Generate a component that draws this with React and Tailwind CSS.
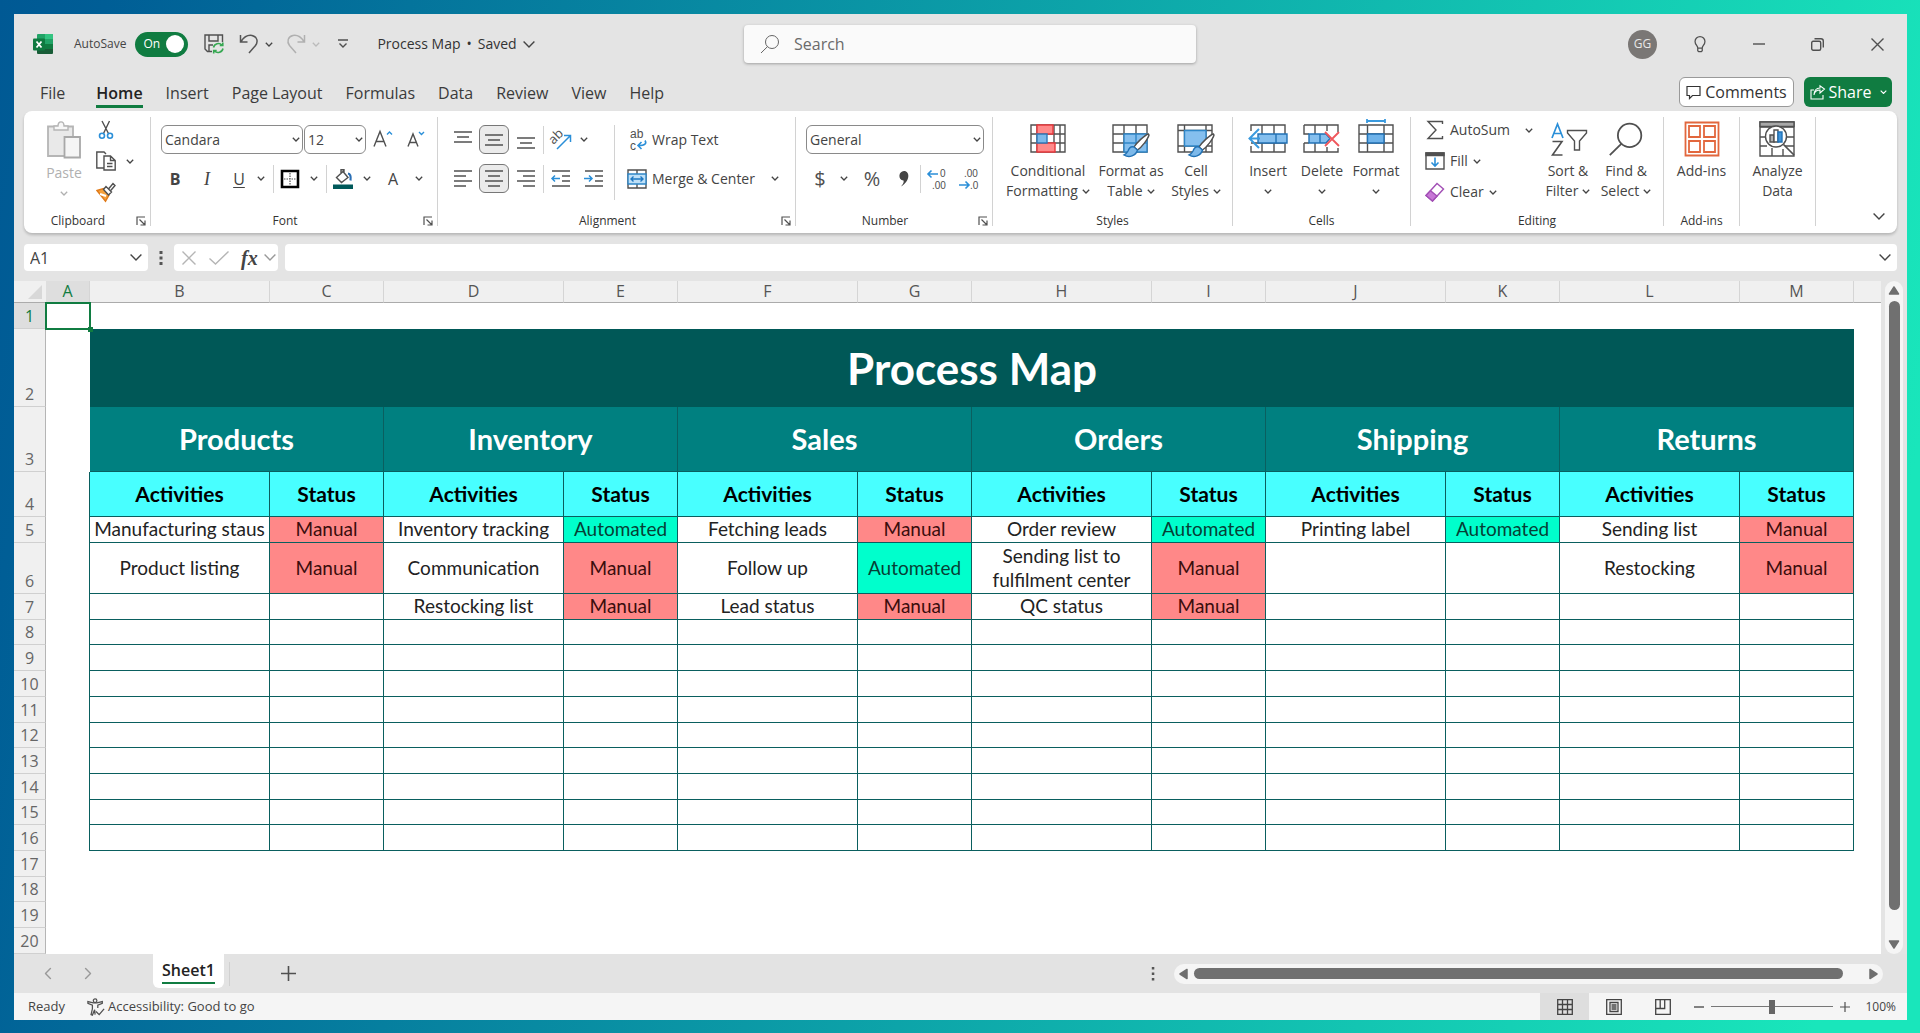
import React, { useState } from "react";

const UI_FONT = "font-['Open_Sans','Noto_Sans',sans-serif]";
const CELL_FONT = "font-[Lato,'Open_Sans',sans-serif]";

const tabs = ["File", "Home", "Insert", "Page Layout", "Formulas", "Data", "Review", "View", "Help"];
const columns = ["A", "B", "C", "D", "E", "F", "G", "H", "I", "J", "K", "L", "M"];

const areas = [
    { name: "Products", steps: [["Manufacturing staus", "Manual"], ["Product listing", "Manual"]] },
    { name: "Inventory", steps: [["Inventory tracking", "Automated"], ["Communication", "Manual"], ["Restocking list", "Manual"]] },
    { name: "Sales", steps: [["Fetching leads", "Manual"], ["Follow up", "Automated"], ["Lead status", "Manual"]] },
    { name: "Orders", steps: [["Order review", "Automated"], ["Sending list to fulfilment center", "Manual"], ["QC status", "Manual"]] },
    { name: "Shipping", steps: [["Printing label", "Automated"]] },
    { name: "Returns", steps: [["Sending list", "Manual"], ["Restocking", "Manual"]] },
];

const statusColor = {
    Manual: "bg-[#ff8888] text-[#3a0d0d]",
    Automated: "bg-[#00ffcc] text-[#063f35]",
};

/* ---------- icons ---------- */

function Icon({ className = "size-5", box = "0 0 20 20", children }) {
    return (
        <svg
            className={`shrink-0 overflow-visible ${className}`}
            viewBox={box}
            fill="none"
            stroke="#505050"
            strokeWidth="1.4"
            aria-hidden="true"
        >
            {children}
        </svg>
    );
}

function Chevron({ className = "w-2 text-[#444]" }) {
    return (
        <svg className={`shrink-0 ${className}`} viewBox="0 0 8 5" fill="none" stroke="currentColor" strokeWidth="1.3" aria-hidden="true">
            <path d="M0.8 0.8 4 4 7.2 0.8" />
        </svg>
    );
}

function ThinChevron({ className = "w-3 text-[#444]" }) {
    return (
        <svg className={`shrink-0 ${className}`} viewBox="0 0 12 7" fill="none" stroke="currentColor" strokeWidth="1.4" aria-hidden="true">
            <path d="M0.6 0.6 6 6 11.4 0.6" />
        </svg>
    );
}

function ExcelLogo() {
    return (
        <Icon className="size-5">
            <g stroke="none">
                <path d="M5 0h14a1 1 0 0 1 1 1v4H4V1a1 1 0 0 1 1-1z" fill="#21a366" />
                <path d="M12 0h7a1 1 0 0 1 1 1v4h-8z" fill="#33c481" />
                <path d="M4 5h8v5H4z" fill="#107c41" />
                <path d="M12 5h8v5h-8z" fill="#21a366" />
                <path d="M4 10h16v9a1 1 0 0 1-1 1H5a1 1 0 0 1-1-1z" fill="#185c37" />
                <path d="M12 10h8v5h-8z" fill="#107c41" />
                <rect y="4.500" width="12" height="12" rx="1" fill="#0f7a40" />
            </g>
            <path d="M3.500 7.500 8.500 13.500M8.500 7.500 3.500 13.500" stroke="#fff" strokeWidth="1.8" />
        </Icon>
    );
}

function SaveIcon() {
    return (
        <Icon>
            <path d="M8 17.500H3.500L1 15V1h17.500v7M5 1v6h9V1M5 17v-6h4" />
            <g stroke="#36a852" strokeWidth="1.600">
                <path d="M9.500 13.500a5 5 0 0 1 8.500-2.500M18.800 8.500v3h-3" />
                <path d="M19 14.500a5 5 0 0 1-8.500 2.500M9.700 19.500v-3h3" />
            </g>
        </Icon>
    );
}

function UndoIcon({ flip, color }) {
    return (
        <Icon className={flip ? "size-5 -scale-x-100" : "size-5"}>
            <path d="M1.500 1v7h7M2 7.500C5 3 9 .8 13 1.500c5 1 6.500 6 3.500 10L10 19" stroke={color} strokeWidth="1.500" />
        </Icon>
    );
}

function SearchIcon({ className, color = "#666" }) {
    return (
        <Icon className={className}>
            <circle cx="12" cy="8" r="6.500" stroke={color} strokeWidth="1" />
            <path d="M7.500 12.600 1 19" stroke={color} strokeWidth="1" />
        </Icon>
    );
}

function PasteIcon() {
    return (
        <Icon className="h-[38px] w-[34px]" box="0 0 34 38">
            <path d="M1 5.500h25V35H1z" fill="#e9e9e9" stroke="#b5b5b5" strokeWidth="1.800" />
            <path d="M7 9V5h4c0-5.500 6-5.500 6 0h4v4z" fill="#f7f7f7" stroke="#b5b5b5" />
            <path d="M17.500 16h15.500v20.500H17.500z" fill="#f5f5f5" stroke="#a8a8a8" strokeWidth="1.800" />
        </Icon>
    );
}

function CutIcon() {
    return (
        <Icon>
            <path d="M6 1l6.500 12.500M13.500 1 7.500 13.500" />
            <circle cx="6" cy="15.800" r="2.500" stroke="#2b8fd8" strokeWidth="1.600" />
            <circle cx="14" cy="15.800" r="2.500" stroke="#2b8fd8" strokeWidth="1.600" />
        </Icon>
    );
}

function CopyIcon() {
    return (
        <Icon>
            <path d="M8 17H.8V1H8l2 2M8 5h6.500L19.200 9.500V19H8zM14.500 5v4.500h4.700M11 12.500h5.500M11 15.500h5.500" />
        </Icon>
    );
}

function PainterIcon() {
    return (
        <Icon>
            <path d="M1 8.500 7.500 6.500 13 13 9.500 19.200z" fill="#f6a13c" stroke="#e07b1a" />
            <path d="M4 12 10 14" stroke="#fff" strokeWidth="2" />
            <path d="M7.500 7.500 10 4.500l5.500 5.500-3 3zM12.500 7 17 1.500l2 2L14.500 8.800" fill="#fff" />
        </Icon>
    );
}

function BordersIcon() {
    return (
        <Icon>
            <path d="M2 2h16v16H2z" stroke="#000" strokeWidth="2.600" />
            <path d="M10 4v12M4 10h12" strokeDasharray="1.500 1" strokeWidth="1.200" />
        </Icon>
    );
}

function FillColorIcon() {
    return (
        <Icon>
            <path d="M0 15.500h20V20H0z" fill="#00595a" stroke="none" />
            <path d="M3.500 8.500 10 2.500l5 6-6.500 5zM8 4.500V.8h3v3" />
            <path d="M15 4.500c2.500.5 3 3.500 2.500 7" stroke="#2a6fb5" strokeWidth="2.200" />
        </Icon>
    );
}

const alignLines = {
    top: [[1, 2, 18], [4, 7, 12], [1, 12, 18]],
    middle: [[1, 5, 18], [4, 10, 12], [1, 15, 18]],
    bottom: [[1, 8, 18], [4, 13, 12], [1, 18, 18]],
    left: [[1, 2, 18], [1, 7, 12], [1, 12, 18], [1, 17, 12]],
    center: [[1, 2, 18], [4, 7, 12], [1, 12, 18], [4, 17, 12]],
    right: [[1, 2, 18], [7, 7, 12], [1, 12, 18], [7, 17, 12]],
};

function AlignIcon({ kind }) {
    return (
        <Icon>
            {alignLines[kind].map(([x, y, w]) => (
                <path key={y} d={`M${x} ${y}h${w}`} strokeWidth="1.500" />
            ))}
        </Icon>
    );
}

function IndentIcon({ increase }) {
    return (
        <Icon>
            <path d="M1 2h18M11 7h8M11 12h8M1 17h18" strokeWidth="1.500" />
            <path
                d={increase ? "M0 9.500h8M5 6.500l3 3-3 3" : "M9 9.500H1M4 6.500l-3 3 3 3"}
                stroke="#2b8fd8"
                strokeWidth="1.500"
            />
        </Icon>
    );
}

function OrientationIcon() {
    return (
        <Icon>
            <text x="0" y="11" transform="rotate(-45 6 10)" fontSize="13" fill="#505050" stroke="none">ab</text>
            <path d="M6 19 19 6M13 5.500h6.500V12" stroke="#2b8fd8" strokeWidth="1.500" />
        </Icon>
    );
}

function WrapIcon() {
    return (
        <Icon className="size-5 font-[Liberation_Sans,sans-serif]">
            <text x="3" y="8" fontSize="12" fill="#505050" stroke="none">ab</text>
            <text x="3" y="20" fontSize="12" fill="#505050" stroke="none">c</text>
            <path d="M18 10.500c2 3 0 5-6.500 5M14.500 12 11 15.500l3.500 3.500" stroke="#2b8fd8" strokeWidth="1.600" />
        </Icon>
    );
}

function MergeIcon() {
    return (
        <Icon>
            <path d="M1 1h18v18H1zM10 1v4M10 15v4" />
            <path d="M1 5h18v10H1z" fill="#bfe0f7" stroke="#2f86c7" />
            <path d="M4 10h12M6.500 7.500 4 10l2.500 2.500M13.500 7.500 16 10l-2.500 2.500" stroke="#1e78c2" />
        </Icon>
    );
}

function DecimalIcon({ increase }) {
    return (
        <Icon className="size-5 font-[Liberation_Sans,sans-serif]">
            <text x={increase ? 13 : 5} y="8" fontSize="10" fill="#505050" stroke="none">{increase ? "0" : ".00"}</text>
            <text x={increase ? 5 : 11} y="20" fontSize="10" fill="#505050" stroke="none">{increase ? ".00" : ".0"}</text>
            <path
                d={increase ? "M11 5H1M4.500 1.500 1 5l3.500 3.500" : "M0 16h10M6.500 12.500 10 16l-3.500 3.500"}
                stroke="#2b8fd8"
                strokeWidth="1.600"
            />
        </Icon>
    );
}

function ConditionalIcon() {
    return (
        <Icon className="size-9" box="0 0 36 36">
            <path d="M1 4h34v27H1zM1 13h34M1 22h34M7 4v27M24 4v27M30 4v27" />
            <path d="M7 4h16v9H7zM7 22h18v9H7z" fill="#ff8a8a" stroke="#e8383d" />
            <path d="M7 13h10v9H7z" fill="#7db9ea" stroke="#2f79b8" />
        </Icon>
    );
}

function Brush() {
    return (
        <>
            <path d="M36.500 13c-4 1-12 9-14.500 13l3.500 3C30 26 36 18 37 14z" fill="#fff" stroke="#505050" />
            <path d="M22 26c-3-1-5 1-6 4-1 2-2 3-4 4 5 3 12 1 13.500-5z" fill="#7db9ea" stroke="#2272b5" />
        </>
    );
}

function FormatTableIcon() {
    return (
        <Icon className="h-9 w-[38px]" box="0 0 38 36">
            <path d="M1 4h34v27H1zM1 13h34M1 22h34M12 4v27M24 4v27" />
            <path d="M12 13h23v18H12z" fill="#85bfee" stroke="#2f86c7" />
            <path d="M24 13v18M12 22h23" stroke="#2f86c7" />
            <Brush />
        </Icon>
    );
}

function CellStylesIcon() {
    return (
        <Icon className="h-9 w-[38px]" box="0 0 38 36">
            <path d="M1 4h34v27H1zM1 9.500h34M1 25h34M7.500 4v27M29 4v27" />
            <path d="M7.500 9.500H29V25H7.500z" fill="#85bfee" stroke="#2f86c7" />
            <Brush />
        </Icon>
    );
}

function InsertIcon() {
    return (
        <Icon className="h-9 w-10" box="0 0 40 36">
            <path d="M3 10V4h34v27H3v-6M14 4v27M26 4v27M3 22h34" />
            <path d="M10 13h29v9H10z" fill="#85bfee" stroke="#2272b5" />
            <path d="M28 13v9" stroke="#2272b5" />
            <path d="M12 17.500H2M11 8l-9.500 9.500L11 27" stroke="#3a9ade" strokeWidth="2" />
        </Icon>
    );
}

function DeleteIcon() {
    return (
        <Icon className="h-9 w-[38px]" box="0 0 38 36">
            <path d="M1 4h34v7M1 4v9h5M1 22v9h34v-4M1 22h5M12 4v9M24 4v6M12 22v9M24 26v5" />
            <path d="M6 13h17l4 4.500-4 4.500H6zM17 13v9" fill="#85bfee" stroke="#2272b5" />
            <path d="M22 11l14 14M36 11 22 25" stroke="#f0575c" strokeWidth="1.800" />
        </Icon>
    );
}

function FormatIcon() {
    return (
        <Icon className="size-9" box="0 0 36 36">
            <path d="M1 4h34v27H1zM1 13h34M1 22h34M9.500 4v27M26 4v27" />
            <path d="M9.500 13H26v9H9.500z" fill="#6fb3ea" stroke="#2272b5" />
            <path d="M9 0h18M9-2v4M27-2v4" stroke="#3a9ade" strokeWidth="1.800" />
        </Icon>
    );
}

function SumIcon() {
    return (
        <Icon>
            <path d="M17.500 4V1.500H3L11 10l-8 8.500h14.500V16" />
        </Icon>
    );
}

function FillIcon() {
    return (
        <Icon>
            <path d="M1 2h18v16H1z" />
            <path d="M1 2h18v2.500H1z" fill="#505050" />
            <path d="M10 6.500V15M6.500 11.500 10 15l3.500-3.500" stroke="#2b8fd8" strokeWidth="1.600" />
        </Icon>
    );
}

function EraserIcon() {
    return (
        <Icon>
            <path d="M1 13.500 12 1.500l6.500 5.500-11 12z" fill="#fff" stroke="#a24fb5" />
            <path d="M1 13.500 5.500 8.600 12 14l-4.500 5z" fill="#c778d6" stroke="#a24fb5" />
        </Icon>
    );
}

function SortIcon() {
    return (
        <Icon className="h-9 w-[38px]" box="0 0 38 36">
            <path d="M3 17 8.500 3 14 17M5 12.500h7" stroke="#2b8fd8" strokeWidth="1.700" />
            <path d="M3.500 20.500h9.500L3.500 34h10" strokeWidth="1.600" />
            <path d="M18.500 9.500h19v2.500l-7 8v9h-5v-9l-7-8z" />
        </Icon>
    );
}

function AddInsIcon() {
    return (
        <Icon className="size-9" box="0 0 36 36">
            <g stroke="#e2673d" strokeWidth="1.800">
                <path d="M1.500 1.500h33v33h-33zM5 5h11v11H5zM20 5h11v11H20zM5 20h11v11H5zM20 20h11v11H20z" />
            </g>
        </Icon>
    );
}

function AnalyzeIcon() {
    return (
        <Icon className="size-9" box="0 0 36 36">
            <path d="M1 1h34v34H1zM1 6h34M1 16h5M28 16h7M1 25h7M26 25h9M13 27v8M24 28v7" />
            <path d="M1 1h34v4.500H1z" fill="#a8a8a8" />
            <circle cx="17" cy="15.500" r="10.500" fill="#fff" />
            <path d="M24.500 23.500 35 34" strokeWidth="1.700" />
            <path d="M11 14h4v7h-4z" fill="#b5b5b5" />
            <path d="M15 9h4v12h-4z" fill="#fff" />
            <path d="M19 11h4v10h-4z" fill="#3f95dd" stroke="#2272b5" />
        </Icon>
    );
}

function Launcher() {
    return (
        <button type="button" aria-label="More options" className="absolute right-1 bottom-0">
            <Icon className="size-[10px]" box="0 0 10 10">
                <path d="M1 9V1h8M3.500 3.500l5.500 5.500M9 4.500V9H4.500" strokeWidth="1.200" />
            </Icon>
        </button>
    );
}

/* ---------- ribbon pieces ---------- */

function Group({ label, launcher, className, children }) {
    return (
        <section className={`relative flex shrink-0 flex-col border-r border-[#d2d2d2] ${className}`}>
            <div className="flex flex-1">{children}</div>
            <h2 className={`h-[11px] text-center text-xs leading-3 text-[#333] ${launcher ? "pr-[18px]" : ""}`}>{label}</h2>
            {launcher && <Launcher />}
        </section>
    );
}

function Tool({ label, active, className = "w-8", children }) {
    return (
        <button
            type="button"
            aria-label={label}
            className={`flex h-[29px] items-center justify-center ${active ? "rounded-md border border-[#777] bg-[#ebebeb]" : ""} ${className}`}
        >
            {children}
        </button>
    );
}

function BigTool({ icon, lines, arrow, className }) {
    return (
        <button type="button" className={`flex flex-col items-center text-sm leading-5 text-[#444] ${className}`}>
            {icon}
            {lines.map((line, i) => (
                <span key={line} className={`flex items-center gap-1 whitespace-nowrap ${i === 0 ? "mt-1" : ""}`}>
                    {line}
                    {arrow && i === lines.length - 1 && lines.length > 1 && <Chevron />}
                </span>
            ))}
            {arrow && lines.length === 1 && <Chevron className="mt-2 w-2 text-[#444]" />}
        </button>
    );
}

function Dropdown({ label, options, className }) {
    return (
        <div className={`relative h-[29px] ${className}`}>
            <select
                aria-label={label}
                className="h-full w-full appearance-none rounded-md border border-[#8a8a8a] bg-white pl-[3px] text-sm text-[#444]"
            >
                {options.map((o) => (
                    <option key={o}>{o}</option>
                ))}
            </select>
            <Chevron className="pointer-events-none absolute top-3 right-[3px] w-2 text-[#444]" />
        </div>
    );
}

function Divider({ className = "h-7" }) {
    return <span className={`w-px bg-[#d2d2d2] ${className}`} />;
}

function Ribbon() {
    return (
        <div className="mx-[10px] flex h-[122px] shrink-0 overflow-hidden rounded-lg bg-white pt-[6px] pb-[7px] shadow-[0_2px_3px_rgba(0,0,0,0.2)]">
            <Group label="Clipboard" launcher className="w-[127px]">
                <button type="button" disabled className="ml-[22px] flex w-9 flex-col items-center pt-1 text-sm leading-5 text-[#b0b0b0]">
                    <PasteIcon />
                    <span className="mt-1">Paste</span>
                    <Chevron className="mt-2 w-2 text-[#b0b0b0]" />
                </button>
                <div className="ml-[14px] flex flex-col gap-[11px] pt-[3px]">
                    <button type="button" aria-label="Cut"><CutIcon /></button>
                    <button type="button" aria-label="Copy" className="flex items-center gap-[10px]"><CopyIcon /><Chevron /></button>
                    <button type="button" aria-label="Format painter"><PainterIcon /></button>
                </div>
            </Group>

            <Group label="Font" launcher className="w-[287px]">
                <div className="flex flex-col gap-[10px] pt-2 pl-[10px]">
                    <div className="flex items-center gap-px">
                        <Dropdown label="Font name" options={["Candara", "Calibri", "Arial"]} className="w-[142px]" />
                        <Dropdown label="Font size" options={["12", "14", "16"]} className="w-[62px]" />
                        <Tool label="Increase font size">
                            <Icon className="size-5">
                                <path d="M1 16.500 7 1.500l6 15M3.200 11.500h7.600" />
                                <path d="M14 4.500 16.500 2 19 4.500" stroke="#2b8fd8" />
                            </Icon>
                        </Tool>
                        <Tool label="Decrease font size">
                            <Icon className="size-5">
                                <path d="M2 16.500 7 4l5 12.500M4 12.500h6" />
                                <path d="M13 2l2.500 2.500L18 2" stroke="#2b8fd8" />
                            </Icon>
                        </Tool>
                    </div>
                    <div className="flex items-center text-base text-[#444]">
                        <Tool label="Bold" className="w-7"><b>B</b></Tool>
                        <Tool label="Italic" className="w-9"><i className="font-[Liberation_Serif,serif] text-lg">I</i></Tool>
                        <Tool label="Underline" className="w-7"><u className="underline-offset-2">U</u></Tool>
                        <Tool label="Underline style" className="w-4"><Chevron /></Tool>
                        <span className="w-1" />
                        <Divider />
                        <Tool label="Borders"><BordersIcon /></Tool>
                        <Tool label="Border style" className="w-4"><Chevron /></Tool>
                        <span className="w-1" />
                        <Divider />
                        <Tool label="Fill color"><FillColorIcon /></Tool>
                        <Tool label="Fill color list" className="w-4"><Chevron /></Tool>
                        <Tool label="Font color" className="w-9">A</Tool>
                        <Tool label="Font color list" className="w-4"><Chevron /></Tool>
                    </div>
                </div>
            </Group>

            <Group label="Alignment" launcher className="w-[358px]">
                <div className="flex flex-col gap-[10px] pt-2 pl-[10px]">
                    <div className="flex items-center gap-px">
                        <Tool label="Top align" className="w-[30px]"><AlignIcon kind="top" /></Tool>
                        <Tool label="Middle align" active className="w-[30px]"><AlignIcon kind="middle" /></Tool>
                        <Tool label="Bottom align"><AlignIcon kind="bottom" /></Tool>
                        <Divider />
                        <Tool label="Orientation"><OrientationIcon /></Tool>
                        <Tool label="Orientation list" className="w-3"><Chevron /></Tool>
                    </div>
                    <div className="flex items-center gap-px">
                        <Tool label="Align left" className="w-[30px]"><AlignIcon kind="left" /></Tool>
                        <Tool label="Align center" active className="w-[30px]"><AlignIcon kind="center" /></Tool>
                        <Tool label="Align right"><AlignIcon kind="right" /></Tool>
                        <Divider />
                        <Tool label="Decrease indent"><IndentIcon /></Tool>
                        <Tool label="Increase indent"><IndentIcon increase /></Tool>
                    </div>
                </div>
                <Divider className="mt-2 ml-1 h-[75px]" />
                <div className="flex flex-1 flex-col gap-[10px] pt-2 pl-3 text-sm text-[#444]">
                    <button type="button" className="flex h-[29px] items-center gap-[5px]"><WrapIcon />Wrap Text</button>
                    <button type="button" className="flex h-[29px] items-center gap-[5px] whitespace-nowrap">
                        <MergeIcon />Merge &amp; Center
                        <Chevron className="ml-auto mr-4 w-2 text-[#444]" />
                    </button>
                </div>
            </Group>

            <Group label="Number" launcher className="w-[197px]">
                <div className="flex flex-col gap-[10px] pt-2 pl-[10px]">
                    <Dropdown label="Number format" options={["General", "Number", "Currency"]} className="w-[178px]" />
                    <div className="flex items-center text-xl text-[#505050]">
                        <Tool label="Accounting format" className="w-7">$</Tool>
                        <Tool label="Accounting list" className="w-5"><Chevron /></Tool>
                        <Tool label="Percent style" className="w-9">%</Tool>
                        <Tool label="Comma style" className="w-[30px]">
                            <Icon>
                                <path d="M9 2c6 0 6.500 10-3 15.500 2.500-3 3-4.500 2.500-6-6-.5-5-9.500.5-9.500z" fill="#444" stroke="none" />
                            </Icon>
                        </Tool>
                        <Divider />
                        <Tool label="Increase decimal"><DecimalIcon increase /></Tool>
                        <Tool label="Decrease decimal"><DecimalIcon /></Tool>
                    </div>
                </div>
            </Group>

            <Group label="Styles" className="w-60">
                <div className="flex pt-1 pl-[9px]">
                    <BigTool icon={<ConditionalIcon />} lines={["Conditional", "Formatting"]} arrow className="w-[92px]" />
                    <BigTool icon={<FormatTableIcon />} lines={["Format as", "Table"]} arrow className="w-[74px]" />
                    <BigTool icon={<CellStylesIcon />} lines={["Cell", "Styles"]} arrow className="w-14" />
                </div>
            </Group>

            <Group label="Cells" className="w-[178px]">
                <div className="flex pt-1 pl-2">
                    <BigTool icon={<InsertIcon />} lines={["Insert"]} arrow className="w-[54px]" />
                    <BigTool icon={<DeleteIcon />} lines={["Delete"]} arrow className="w-[54px]" />
                    <BigTool icon={<FormatIcon />} lines={["Format"]} arrow className="w-[54px]" />
                </div>
            </Group>

            <Group label="Editing" className="w-[253px]">
                <div className="flex w-[122px] flex-col gap-[11px] pt-[3px] pl-[14px] text-sm leading-5 text-[#444]">
                    <button type="button" className="flex items-center gap-[5px]"><SumIcon />AutoSum<Chevron className="ml-auto w-2 text-[#444]" /></button>
                    <button type="button" className="flex items-center gap-[5px]"><FillIcon />Fill<Chevron /></button>
                    <button type="button" className="flex items-center gap-[5px]"><EraserIcon />Clear<Chevron /></button>
                </div>
                <div className="ml-[6px] flex pt-1">
                    <BigTool icon={<SortIcon />} lines={["Sort &", "Filter"]} arrow className="w-[58px]" />
                    <BigTool icon={<SearchIcon className="size-9" color="#505050" />} lines={["Find &", "Select"]} arrow className="w-[58px]" />
                </div>
            </Group>

            <Group label="Add-ins" className="w-[76px]">
                <div className="flex flex-1 justify-center pt-1">
                    <BigTool icon={<AddInsIcon />} lines={["Add-ins"]} />
                </div>
            </Group>

            <Group className="w-[76px]">
                <div className="flex flex-1 justify-center pt-1">
                    <BigTool icon={<AnalyzeIcon />} lines={["Analyze", "Data"]} />
                </div>
            </Group>

            <button type="button" aria-label="Collapse ribbon" className="mr-3 ml-auto self-end pb-[6px]">
                <ThinChevron />
            </button>
        </div>
    );
}

/* ---------- window chrome ---------- */

function TitleBar() {
    return (
        <header className="flex h-[60px] shrink-0 items-center pl-[19px]">
            <div className="flex flex-1 items-center">
                <ExcelLogo />
                <label className="ml-[21px] flex items-center gap-[9px] text-xs text-[#444]">
                    AutoSave
                    <input type="checkbox" defaultChecked className="peer sr-only" />
                    <span className="flex h-[25px] w-[53px] items-center justify-between rounded-full bg-[#107c41] pr-1 pl-2 text-white">
                        On
                        <span className="size-[18px] rounded-full bg-white" />
                    </span>
                </label>
                <button type="button" aria-label="Save" className="ml-4"><SaveIcon /></button>
                <button type="button" aria-label="Undo" className="ml-[15px] flex items-center gap-[6px]"><UndoIcon color="#555" /><Chevron /></button>
                <button type="button" aria-label="Redo" className="ml-[13px] flex items-center gap-[6px]"><UndoIcon flip color="#b0b0b0" /><Chevron className="w-2 text-[#bbb]" /></button>
                <button type="button" aria-label="Customize toolbar" className="ml-[18px]">
                    <Icon className="size-[10px]" box="0 0 10 10">
                        <path d="M0 1h10M1.500 4.500 5 8l3.500-3.500" />
                    </Icon>
                </button>
                <button type="button" className="ml-[29px] flex items-center gap-[6px] text-sm whitespace-nowrap text-[#333]">
                    <span>Process Map</span>
                    <span>•</span>
                    <span>Saved</span>
                    <ThinChevron />
                </button>
            </div>

            <label className="flex h-[38px] w-[452px] items-center gap-[14px] rounded bg-[#fafafa] pl-4 shadow-[0_1px_3px_rgba(0,0,0,0.3)]">
                <SearchIcon className="size-5" />
                <input type="search" aria-label="Search" placeholder="Search" className="flex-1 text-base text-[#444] outline-none placeholder:text-[#6b6b6b]" />
            </label>

            <div className="flex flex-1 items-center justify-end">
                <button type="button" className="size-[29px] rounded-full bg-[#7a7775] text-xs text-[#e8e8e8]">GG</button>
                <button type="button" aria-label="Tips" className="ml-[14px] flex w-[58px] justify-center">
                    <Icon className="size-[18px]">
                        <path d="M7.500 14.500C7.500 12 4.500 11 4.500 7.200a5.500 5.500 0 0 1 11 0c0 3.800-3 4.800-3 7.300zM7.500 14.500v3l1 1h3l1-1v-3" />
                    </Icon>
                </button>
                <button type="button" aria-label="Minimize" className="flex w-[59px] justify-center">
                    <Icon className="size-3" box="0 0 12 12"><path d="M0 6h12" /></Icon>
                </button>
                <button type="button" aria-label="Restore" className="flex w-[59px] justify-center">
                    <Icon className="size-[13px]" box="0 0 13 13">
                        <rect x="0.700" y="3.300" width="9" height="9" rx="1.500" />
                        <path d="M3.500.8H10A2.300 2.300 0 0 1 12.300 3v6.500" />
                    </Icon>
                </button>
                <button type="button" aria-label="Close" className="flex w-[60px] justify-center">
                    <Icon className="size-[13px]" box="0 0 13 13"><path d="M.5.5l12 12M12.500.5l-12 12" /></Icon>
                </button>
            </div>
        </header>
    );
}

function TabBar() {
    const [tab, setTab] = useState("Home");

    return (
        <nav className="flex h-[37px] shrink-0 items-start justify-between pt-[2px] pr-[15px] pl-[26px]">
            <div className="flex gap-[23px] pt-[5px] text-base leading-6 text-[#3b3b3b]">
                {tabs.map((t) => (
                    <button
                        key={t}
                        type="button"
                        onClick={() => setTab(t)}
                        className={
                            t === tab
                                ? "border-b-[3px] border-[#107c41] font-semibold text-[#222] first:mr-2"
                                : "border-b-[3px] border-transparent first:mr-2"
                        }
                    >
                        {t}
                    </button>
                ))}
            </div>
            <div className="flex gap-[10px] pt-px text-base">
                <button type="button" className="flex h-[30px] w-[115px] items-center justify-center gap-1 rounded-md border border-[#999] bg-white text-[#333]">
                    <Icon className="size-[15px]" box="0 0 15 15">
                        <path d="M1 1.500h13v9H6.500L3.500 13.500v-3H1z" stroke="#333" strokeWidth="1.200" />
                    </Icon>
                    Comments
                </button>
                <button type="button" className="flex h-[30px] w-[88px] items-center justify-center gap-1 rounded-md bg-[#107c41] text-white">
                    <Icon className="size-[15px]" box="0 0 15 15">
                        <path d="M4 5H1v9h12V10M4 10c.5-3.500 2.500-5 6-5V8l4.500-4L10 .8V3C6 3 4 6 4 10z" stroke="#fff" strokeWidth="1.100" />
                    </Icon>
                    Share
                    <Chevron className="ml-1 w-[7px] text-white" />
                </button>
            </div>
        </nav>
    );
}

function FormulaBar() {
    return (
        <div className="mt-[11px] flex h-[27px] shrink-0 items-stretch px-[10px]">
            <div className="flex w-[124px] items-center rounded bg-white pr-[6px] pl-[6px]">
                <input aria-label="Name box" defaultValue="A1" className="w-0 flex-1 text-base text-[#444] outline-none" />
                <ThinChevron />
            </div>
            <span className="flex w-[26px] items-center justify-center">
                <Icon className="h-[14px] w-1" box="0 0 4 14">
                    <path d="M.5 0h3v3h-3zM.5 5.500h3v3h-3zM.5 11h3v3h-3z" fill="#555" stroke="none" />
                </Icon>
            </span>
            <div className="flex w-[104px] items-center rounded bg-white pl-2">
                <button type="button" aria-label="Cancel">
                    <Icon className="size-[14px]" box="0 0 14 14"><path d="M.5.5l13 13M13.500.5l-13 13" stroke="#b5b5b5" /></Icon>
                </button>
                <button type="button" aria-label="Enter" className="ml-[13px]">
                    <Icon className="h-[14px] w-5" box="0 0 20 14"><path d="M.5 7.500 6.500 13 19.500.5" stroke="#b5b5b5" /></Icon>
                </button>
                <button type="button" aria-label="Insert function" className="ml-3 font-[Liberation_Serif,serif] text-xl leading-6 font-semibold text-[#444] italic">
                    fx
                </button>
                <ThinChevron className="ml-[6px] w-3 text-[#999]" />
            </div>
            <div className="ml-[7px] flex flex-1 items-center rounded bg-white pr-[6px]">
                <input aria-label="Formula" className="flex-1 px-2 text-sm outline-none" />
                <ThinChevron />
            </div>
        </div>
    );
}

/* ---------- sheet ---------- */

const gridLine = "border-r border-b border-[#0a5f5f]";

function RowHeader({ n, active }) {
    return (
        <th
            scope="row"
            className={`border-r border-b border-[#d0d0d0] border-r-[#b5b5b5] p-0 align-bottom leading-6 ${UI_FONT} text-base font-normal ${active ? "bg-[#dedede] text-[#107c41]" : "bg-[#f0f0f0] text-[#666]"}`}
        >
            {n}
        </th>
    );
}

function StepRow({ n, height, index }) {
    return (
        <tr className={height}>
            <RowHeader n={n} />
            <td className="border-r border-[#0a5f5f]" />
            {areas.map((area) => {
                const [activity, status] = area.steps[index] || ["", ""];
                return (
                    <React.Fragment key={area.name}>
                        <td className={`px-1 py-0 ${activity.length > 20 ? "" : "whitespace-nowrap"} ${gridLine}`}>{activity}</td>
                        <td className={`p-0 ${gridLine} ${statusColor[status] || ""}`}>{status}</td>
                    </React.Fragment>
                );
            })}
            <td />
        </tr>
    );
}

function Sheet() {
    return (
        <table className={`h-full w-full table-fixed border-separate border-spacing-0 bg-white text-center text-[19px] leading-6 text-[#222] ${CELL_FONT}`}>
            <colgroup>
                <col className="w-8" />
                <col className="w-[44px]" />
                {areas.map((a) => (
                    <React.Fragment key={a.name}>
                        <col className="w-[180px]" />
                        <col className="w-[114px]" />
                    </React.Fragment>
                ))}
                <col />
            </colgroup>
            <thead>
                <tr className={`h-[22px] ${UI_FONT} text-base leading-[21px] text-[#555]`}>
                    <th className="border-b border-[#ababab] bg-[#f0f0f0] p-0" aria-label="Select all">
                        <Icon className="mr-1 ml-auto size-[14px]" box="0 0 12 12"><path d="M12 0v12H0z" fill="#d8d8d8" stroke="none" /></Icon>
                    </th>
                    {columns.map((c) => (
                        <th
                            key={c}
                            scope="col"
                            className={`border-r border-b border-[#d5d5d5] border-b-[#ababab] p-0 font-normal ${c === "A" ? "bg-[#dedede] text-[#107c41]" : "bg-[#f0f0f0]"}`}
                        >
                            {c}
                        </th>
                    ))}
                    <th className="border-b border-[#ababab] bg-[#f0f0f0] p-0" />
                </tr>
            </thead>
            <tbody>
                <tr className="h-[25px]">
                    <RowHeader n={1} active />
                    <td className="relative p-0">
                        <span className="absolute -inset-px border-2 border-[#107c41]" />
                        <span className="absolute -right-[3px] -bottom-[3px] size-[5px] bg-[#107c41]" />
                    </td>
                    <td colSpan={13} />
                </tr>
                <tr className="h-[76px]">
                    <RowHeader n={2} />
                    <td />
                    <td colSpan={12} className="bg-[#005857] p-0 text-[44px] leading-[52px] font-bold text-white">Process Map</td>
                    <td />
                </tr>
                <tr className="h-[63px]">
                    <RowHeader n={3} />
                    <td />
                    {areas.map((a) => (
                        <td key={a.name} colSpan={2} className={`bg-[#008080] p-0 text-[29px] leading-9 font-bold text-white ${gridLine}`}>{a.name}</td>
                    ))}
                    <td />
                </tr>
                <tr className="h-[44px] text-[21px] font-bold text-black">
                    <RowHeader n={4} />
                    <td className="border-r border-[#0a5f5f]" />
                    {areas.map((a) => (
                        <React.Fragment key={a.name}>
                            <td className={`bg-[#48ffff] p-0 ${gridLine}`}>Activities</td>
                            <td className={`bg-[#48ffff] p-0 ${gridLine}`}>Status</td>
                        </React.Fragment>
                    ))}
                    <td />
                </tr>
                <StepRow n={5} height="h-[25px]" index={0} />
                <StepRow n={6} height="h-[50px]" index={1} />
                {Array.from({ length: 10 }, (_, i) => (
                    <StepRow key={i} n={i + 7} height="h-[25px]" index={i + 2} />
                ))}
                {[17, 18, 19, 20].map((n) => (
                    <tr key={n} className="h-[25px]">
                        <RowHeader n={n} />
                        <td colSpan={14} />
                    </tr>
                ))}
            </tbody>
        </table>
    );
}

function Arrow({ d, className = "size-3" }) {
    return (
        <svg className={`shrink-0 ${className}`} viewBox="0 0 12 12" fill="#6e6e6e" stroke="#6e6e6e" strokeWidth="1.500" strokeLinejoin="round" aria-hidden="true">
            <path d={d} />
        </svg>
    );
}

function SheetTabs() {
    return (
        <div className="flex h-[39px] shrink-0 items-center bg-[#e3e3e3]">
            <div className="flex w-[139px] gap-7 pl-7">
                <button type="button" aria-label="Previous sheet"><ThinChevron className="w-3 rotate-90 text-[#999]" /></button>
                <button type="button" aria-label="Next sheet"><ThinChevron className="w-3 -rotate-90 text-[#999]" /></button>
            </div>
            <button type="button" className="h-[34px] w-[71px] self-start rounded-b-md bg-white text-base font-semibold text-[#222]">
                <span className="inline-block border-b-2 border-[#107c41] leading-6">Sheet1</span>
            </button>
            <span className="ml-[5px] h-6 w-px bg-[#d0d0d0]" />
            <button type="button" aria-label="New sheet" className="ml-[51px]">
                <Icon className="size-[15px]" box="0 0 15 15"><path d="M7.500 0v15M0 7.500h15" strokeWidth="1.600" /></Icon>
            </button>
            <div className="mr-6 ml-auto flex w-[732px] items-center gap-[19px]">
                <Icon className="h-[14px] w-1" box="0 0 4 14">
                    <path d="M.8 0h2.500v2.500H.8zM.8 5.500h2.500V8H.8zM.8 11h2.500v2.500H.8z" fill="#555" stroke="none" />
                </Icon>
                <div className="flex h-5 flex-1 items-center gap-1 rounded-full bg-[#f5f5f5] px-1">
                    <Arrow d="M9 1.500v9L2 6z" />
                    <span className="h-[11px] flex-1 rounded-full bg-[#707070]" />
                    <Arrow d="M3 1.500v9L10 6z" className="ml-5 size-3" />
                </div>
            </div>
        </div>
    );
}

function StatusBar() {
    return (
        <footer className="flex h-[27px] shrink-0 items-center bg-[#f5f5f5] pr-[11px] pl-[14px] text-[13px] text-[#444]">
            <span>Ready</span>
            <button type="button" className="ml-[22px] flex items-center gap-[3px]">
                <Icon className="size-[18px]">
                    <circle cx="9" cy="3" r="2" />
                    <path d="M9 18.500 8.500 13 6 19 4.500 18.500 6 12V8L1 6V4l6 1.500h4L17 4v2l-5 2v3M10 15l3.500 3.500L19 12" />
                </Icon>
                Accessibility: Good to go
            </button>
            <div className="ml-auto flex items-center self-stretch">
                <button type="button" aria-label="Normal view" className="flex h-full w-[49px] items-center justify-center bg-[#dedede]">
                    <Icon className="size-4" box="0 0 16 16"><path d="M.7.7h14.600v14.600H.7zM5.500.7v14.600M10.500.7v14.600M.7 5.500h14.600M.7 10.500h14.600" stroke="#444" strokeWidth="1.300" /></Icon>
                </button>
                <button type="button" aria-label="Page layout view" className="flex w-[49px] justify-center">
                    <Icon className="size-4" box="0 0 16 16"><path d="M.7.7h14.600v14.600H.7zM4 3.500h8v9H4zM5.500 6h5M5.500 8h5M5.500 10h5" stroke="#444" strokeWidth="1.300" /></Icon>
                </button>
                <button type="button" aria-label="Page break view" className="flex w-[49px] justify-center">
                    <Icon className="size-4" box="0 0 16 16"><path d="M.7.7h14.600v14.600H.7zM.7 9.500h9V.7M5.200.7v8.800" stroke="#444" strokeWidth="1.300" /></Icon>
                </button>
                <button type="button" aria-label="Zoom out" className="ml-[7px]">
                    <Icon className="size-[10px]" box="0 0 10 10"><path d="M0 5h10" /></Icon>
                </button>
                <input
                    type="range"
                    aria-label="Zoom"
                    defaultValue={50}
                    className="mx-[7px] h-4 w-[122px] appearance-none bg-[linear-gradient(#777,#777)] bg-size-[100%_1px] bg-center bg-no-repeat [&::-webkit-slider-thumb]:h-[14px] [&::-webkit-slider-thumb]:w-[6px] [&::-webkit-slider-thumb]:appearance-none [&::-webkit-slider-thumb]:bg-[#666]"
                />
                <button type="button" aria-label="Zoom in">
                    <Icon className="size-[10px]" box="0 0 10 10"><path d="M0 5h10M5 0v10" strokeWidth="1.200" /></Icon>
                </button>
                <span className="ml-3 w-[34px] text-right text-xs">100%</span>
            </div>
        </footer>
    );
}

export default function App() {
    return (
        <div className={`h-screen bg-[linear-gradient(100deg,#005994_0%,#005e96_5%,#19e6bb_95%)] pt-[14px] pr-[13px] pb-[13px] pl-[14px] ${UI_FONT}`}>
            <main className="flex h-full flex-col overflow-hidden bg-[#e4e4e4]">
                <TitleBar />
                <TabBar />
                <Ribbon />
                <FormulaBar />
                <div className="mt-[10px] flex min-h-0 flex-1">
                    <div className="min-w-0 flex-1 overflow-hidden">
                        <Sheet />
                    </div>
                    <div className="mr-1 ml-[4px] flex w-[18px] flex-col items-center gap-1 rounded-full bg-[#f5f5f5] py-1">
                        <Arrow d="M1.500 9h9L6 2z" />
                        <span className="w-[11px] flex-1 rounded-full bg-[#707070]" />
                        <Arrow d="M1.500 3h9L6 10z" className="mt-6 size-3" />
                    </div>
                </div>
                <SheetTabs />
                <StatusBar />
            </main>
        </div>
    );
}
